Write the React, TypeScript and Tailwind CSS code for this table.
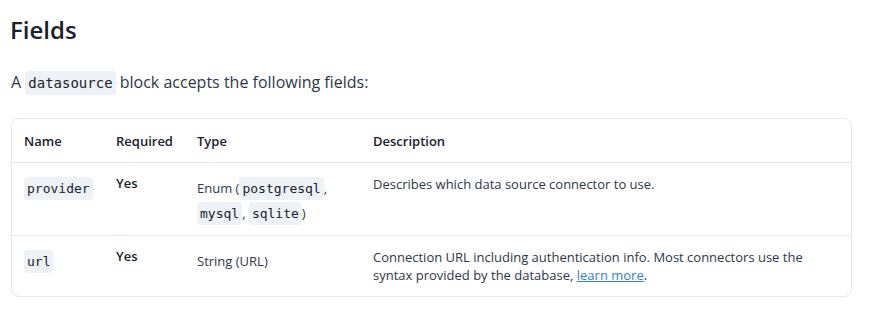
const sans = { fontFamily: '"Open Sans", "Noto Sans", sans-serif' };

function Code({ children }: { children: React.ReactNode }) {
  return (
    <code className="rounded-[4px] bg-[#edf2f7] px-[3px] py-[4px] font-['DejaVu_Sans_Mono',monospace] text-[13px] text-[#1a202c]">
      {children}
    </code>
  );
}

type Row = {
  name: string;
  required: string;
  type: React.ReactNode;
  description: React.ReactNode;
};

const rows: Row[] = [
  {
    name: 'provider',
    required: 'Yes',
    type: (
      <>
        Enum (<Code>postgresql</Code>, <Code>mysql</Code>, <Code>sqlite</Code>)
      </>
    ),
    description: 'Describes which data source connector to use.',
  },
  {
    name: 'url',
    required: 'Yes',
    type: 'String (URL)',
    description: (
      <>
        Connection URL including authentication info. Most connectors use the
        syntax provided by the database,{' '}
        <a href="#" className="text-[#3182ce] underline">
          learn more
        </a>
        .
      </>
    ),
  },
];

export default function App() {
  return (
    <div className="h-[318px] w-[874px] bg-white px-[11px] pt-[14px] text-[#2d3748]" style={sans}>
      <h2 className="-ml-[1px] text-[24px] font-semibold leading-[32px] text-[#1a202c]">Fields</h2>
      <p className="mt-[24px] text-[16px] leading-[24px]">
        A{' '}
        <code className="rounded-[4px] bg-[#edf2f7] px-[3px] py-[4px] font-['DejaVu_Sans_Mono',monospace] text-[14px] text-[#1a202c]">
          datasource
        </code>{' '}
        block accepts the following fields:
      </p>
      <div className="mt-[23px] w-[841px] overflow-hidden rounded-[8px] border border-[#e2e8f0]">
        <table className="w-full border-collapse text-left text-[13px]">
          <thead>
            <tr className="h-[43px] border-b border-[#e2e8f0]">
              <th className="w-[92px] pl-[12px] pt-[2px] font-semibold text-[#1a202c]">Name</th>
              <th className="w-[81px] pl-[12px] pt-[2px] font-semibold text-[#1a202c]">Required</th>
              <th className="w-[176px] pl-[12px] pt-[2px] font-semibold text-[#1a202c]">Type</th>
              <th className="pl-[12px] pt-[2px] font-semibold text-[#1a202c]">Description</th>
            </tr>
          </thead>
          <tbody>
            {rows.map((r, i) => (
              <tr
                key={r.name}
                className={i < rows.length - 1 ? 'h-[73px] border-b border-[#e2e8f0]' : 'h-[61px]'}
              >
                <td className="pl-[12px] pt-[13px] align-top leading-[25px]">
                  <Code>{r.name}</Code>
                </td>
                <td className="pl-[12px] pt-[11px] align-top font-semibold leading-[18px] text-[#1a202c]">
                  {r.required}
                </td>
                <td className="pl-[12px] pr-[20px] pt-[13px] align-top leading-[25px]">{r.type}</td>
                <td className="pl-[12px] pr-[40px] pt-[12px] align-top leading-[18px]">{r.description}</td>
              </tr>
            ))}
          </tbody>
        </table>
      </div>
    </div>
  );
}
